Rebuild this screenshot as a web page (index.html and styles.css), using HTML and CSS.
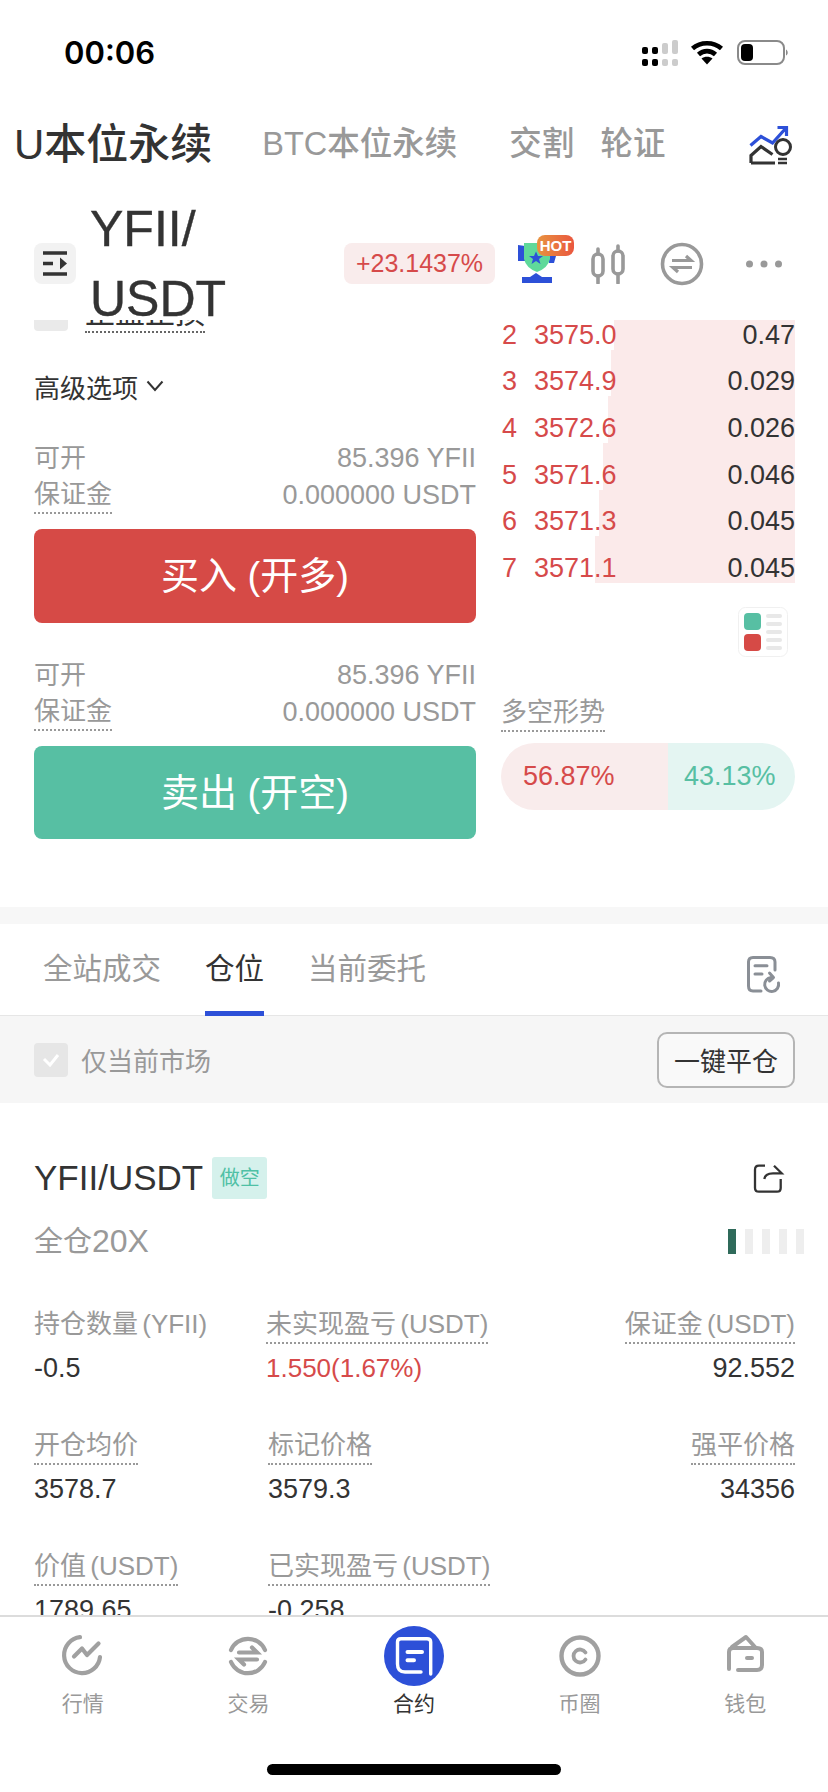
FILE: index.html
```html
<!DOCTYPE html>
<html lang="zh">
<head>
<meta charset="utf-8">
<title>合约</title>
<link rel="stylesheet" href="styles.css">
</head>
<body>
<div class="app">
  <header class="status">
    <span class="time">00:06</span>
    <div class="status-icons">
      <svg width="38" height="26" viewBox="0 0 38 26"><g fill="#000"><rect x="0" y="7" width="6" height="7" rx="2"/><rect x="10" y="7" width="6" height="7" rx="2"/><rect x="0" y="19" width="6" height="7" rx="2"/><rect x="10" y="19" width="6" height="7" rx="2"/></g><g fill="#ccc"><rect x="20" y="3" width="6" height="11" rx="2"/><rect x="30" y="0" width="6" height="14" rx="2"/><rect x="20" y="19" width="6" height="7" rx="2"/><rect x="30" y="19" width="6" height="7" rx="2"/></g></svg>
      <svg class="wifi" width="34" height="26" viewBox="0 0 34 26"><path d="M2.500 9.500C10.500 2.500 23.500 2.500 31.500 9.500M8.500 15.500C13.500 11 20.500 11 25.500 15.500" fill="none" stroke="#000" stroke-width="4.600"/><path d="M17 25.500L11.500 19.500C14.500 17 19.500 17 22.500 19.500Z" fill="#000"/></svg>
      <svg class="battery" width="52" height="26" viewBox="0 0 52 26"><rect x="1" y="1" width="46" height="23" rx="7" fill="none" stroke="#8a8a8a" stroke-width="2"/><rect x="4" y="4" width="12" height="17" rx="4" fill="#000"/><path d="M49 9.500C51 10.500 51.500 14.500 49 15.500Z" fill="#8a8a8a"/></svg>
    </div>
  </header>

  <nav class="top-tabs">
    <span class="top-tab active">U本位永续</span>
    <span class="top-tab">BTC本位永续</span>
    <span class="top-tab">交割</span>
    <span class="top-tab near">轮证</span>
    <svg class="idea" width="44" height="40" viewBox="0 0 44 40"><path d="M1.500 19.500L12 10.500L23.500 17L37 2M28.500 1.500H37.500V10" fill="none" stroke="#2d50d8" stroke-width="3.200"/><path d="M2 37V29.500L12 20.500L23.500 28.500M2 37H26" fill="none" stroke="#333" stroke-width="3.200"/><circle cx="34" cy="21" r="7.500" fill="none" stroke="#333" stroke-width="3"/><path d="M29 33H38M29 37H38" stroke="#333" stroke-width="2.600"/></svg>
  </nav>

  <section class="pair">
    <div class="pair-menu">
      <svg width="26" height="27" viewBox="0 0 26 27"><path d="M1 3H25M1 24H25M1 13.500H11" stroke="#333" stroke-width="3.600"/><path d="M18 7.500L25 13.500L18 19.500Z" fill="#333"/></svg>
    </div>
    <div class="pair-name">YFII/<br>USDT</div>
    <span class="pair-change">+23.1437%</span>
    <svg class="trophy" width="56" height="48" viewBox="0 0 56 48">
      <defs><linearGradient id="hot" x1="0" x2="1" y1="0" y2="0"><stop offset="0" stop-color="#e8933f"/><stop offset="1" stop-color="#ea573f"/></linearGradient></defs>
      <path d="M0 10L7 11V26H0ZM31 21H38L36 28H31Z" fill="#2d50d8"/>
      <path d="M6 8H32V24Q30 33 19 37Q8 33 6 24Z" fill="#5fd99a"/>
      <path d="M18 16.500L20 21H25L21 24L22.500 29L18 26L13.500 29L15 24L11 21H16Z" fill="#2d50d8"/>
      <path d="M4 42H12L18 38L24 42H34V48H4Z" fill="#2d50d8"/>
      <rect x="19" y="0" width="37" height="21" rx="8" fill="url(#hot)"/>
      <text x="37.500" y="16" text-anchor="middle" class="hot">HOT</text>
    </svg>
    <svg class="candle" width="36" height="40" viewBox="0 0 36 40"><g fill="none" stroke="#999" stroke-width="3.600" stroke-linecap="round"><rect x="3" y="10" width="10" height="22" rx="5"/><rect x="23" y="7" width="10" height="23" rx="5"/><path d="M8 5V10M8 32V39M28 2V7M28 30V39"/></g></svg>
    <svg class="swap" width="44" height="44" viewBox="0 0 44 44"><circle cx="22" cy="22" r="19.500" fill="none" stroke="#999" stroke-width="3.600"/><path d="M12 18.500H31L26 14M32 25.500H13L18 30" fill="none" stroke="#999" stroke-width="3.200"/></svg>
    <svg class="dots" width="36" height="8" viewBox="0 0 36 8"><g fill="#999"><circle cx="3.500" cy="4" r="3.500"/><circle cx="18" cy="4" r="3.500"/><circle cx="32.500" cy="4" r="3.500"/></g></svg>
  </section>

  <main class="content">
    <section class="trade">
      <div class="trade-form">
        <div class="stop-row"><span class="stop-check"></span><span class="stop-label">止盈止损</span></div>
        <div class="advanced">高级选项<svg width="18" height="12" viewBox="0 0 18 12"><path d="M1.500 1.500L9 10L16.500 1.500" fill="none" stroke="#333" stroke-width="2"/></svg></div>
        <div class="info first">
          <div class="info-row"><span>可开</span><span class="num">85.396 YFII</span></div>
          <div class="info-row"><span class="dotted">保证金</span><span class="num">0.000000 USDT</span></div>
        </div>
        <button class="action buy">买入 (开多)</button>
        <div class="info second">
          <div class="info-row"><span>可开</span><span class="num">85.396 YFII</span></div>
          <div class="info-row"><span class="dotted">保证金</span><span class="num">0.000000 USDT</span></div>
        </div>
        <button class="action sell">卖出 (开空)</button>
      </div>
      <div class="book">
        <div class="book-rows">
          <div class="book-row" style="background-size:181px 100%"><span class="idx">2</span><span class="price">3575.0</span><span class="amt">0.47</span></div>
          <div class="book-row" style="background-size:184px 100%"><span class="idx">3</span><span class="price">3574.9</span><span class="amt">0.029</span></div>
          <div class="book-row" style="background-size:187px 100%"><span class="idx">4</span><span class="price">3572.6</span><span class="amt">0.026</span></div>
          <div class="book-row" style="background-size:192px 100%"><span class="idx">5</span><span class="price">3571.6</span><span class="amt">0.046</span></div>
          <div class="book-row" style="background-size:196px 100%"><span class="idx">6</span><span class="price">3571.3</span><span class="amt">0.045</span></div>
          <div class="book-row" style="background-size:200px 100%"><span class="idx">7</span><span class="price">3571.1</span><span class="amt">0.045</span></div>
        </div>
        <div class="book-view">
          <svg width="50" height="50" viewBox="0 0 50 50"><rect x="0.500" y="0.500" width="49" height="49" rx="7" fill="#fff" stroke="#f0f0f0"/><rect x="6" y="6" width="17" height="17" rx="4" fill="#57bfa3"/><rect x="6" y="27" width="17" height="17" rx="4" fill="#d64a46"/><g fill="#e8e8e8"><rect x="28" y="7" width="16" height="4" rx="2"/><rect x="28" y="15" width="16" height="4" rx="2"/><rect x="28" y="23" width="16" height="4" rx="2"/><rect x="28" y="31" width="16" height="4" rx="2"/><rect x="28" y="39" width="16" height="4" rx="2"/></g></svg>
        </div>
        <div class="trend-label"><span class="dotted">多空形势</span></div>
        <div class="trend">
          <span class="long">56.87%</span>
          <span class="short">43.13%</span>
        </div>
      </div>
    </section>

    <div class="sep"></div>

    <nav class="sub-tabs">
      <span class="sub-tab">全站成交</span>
      <span class="sub-tab active">仓位</span>
      <span class="sub-tab">当前委托</span>
      <svg class="record" width="50" height="50" viewBox="0 0 50 50"><g fill="none" stroke="#8a8f96" stroke-width="3" stroke-linecap="round" stroke-linejoin="round"><path d="M35 20V12Q35 7.500 30 7.500H13Q8.500 7.500 8.500 12V36Q8.500 41 13 41H21"/><path d="M15 15.700H27M15 24H22"/><path d="M38.500 33A7 7 0 1 1 31 27.500"/><path d="M29.500 23L33.500 27.500L29.500 31"/></g></svg>
    </nav>

    <div class="toolbar">
      <span class="check"><svg width="18" height="14" viewBox="0 0 18 14"><path d="M2 6L8 12L16 2" fill="none" stroke="#fff" stroke-width="3"/></svg></span>
      <span class="check-label">仅当前市场</span>
      <button class="close-all">一键平仓</button>
    </div>

    <article class="position">
      <div class="pos-head">
        <span class="pos-name">YFII/USDT</span>
        <span class="pos-tag">做空</span>
        <svg class="share" width="50" height="50" viewBox="0 0 50 50"><path d="M20 10.700H14Q10 10.700 10 14.700V33Q10 36.700 14 36.700H32Q35.700 36.700 35.700 33V24M19.300 24Q20 18.300 28 18.300H36.700L29 10.700" fill="none" stroke="#333" stroke-width="2.300"/></svg>
      </div>
      <div class="pos-sub">
        <span class="pos-lev">全仓<span class="lev-num">20X</span></span>
        <div class="risk"><i class="on"></i><i></i><i></i><i></i><i></i></div>
      </div>
      <div class="pos-grid">
        <div class="cell"><span class="label">持仓数量 (YFII)</span><span class="value">-0.5</span></div>
        <div class="cell shift"><span class="label dotted">未实现盈亏 (USDT)</span><span class="value red">1.550(1.67%)</span></div>
        <div class="cell end"><span class="label dotted">保证金 (USDT)</span><span class="value">92.552</span></div>
        <div class="cell"><span class="label dotted">开仓均价</span><span class="value">3578.7</span></div>
        <div class="cell"><span class="label dotted">标记价格</span><span class="value">3579.3</span></div>
        <div class="cell end"><span class="label dotted">强平价格</span><span class="value">34356</span></div>
        <div class="cell"><span class="label dotted">价值 (USDT)</span><span class="value">1789.65</span></div>
        <div class="cell"><span class="label dotted">已实现盈亏 (USDT)</span><span class="value">-0.258</span></div>
      </div>
    </article>
  </main>

  <footer class="tabbar">
    <div class="tabs">
      <div class="tab">
        <svg width="48" height="48" viewBox="0 0 48 48"><g fill="none" stroke="#a0a0a0" stroke-width="4.200" stroke-linecap="round" stroke-linejoin="round"><path d="M21 5.200A18 18 0 1 0 41 25"/><path d="M15 24.500L23 16.500L28 23L39.500 11.500"/></g></svg>
        <span>行情</span>
      </div>
      <div class="tab">
        <svg width="48" height="48" viewBox="0 0 48 48"><g fill="none" stroke="#a0a0a0" stroke-width="4.200" stroke-linecap="round"><path d="M7 18A18.500 18.500 0 0 1 41 18M7 30A18.500 18.500 0 0 0 41 30"/><path d="M15 20.500H33L28 15.500M33 27.500H15L20 32.500"/></g></svg>
        <span>交易</span>
      </div>
      <div class="tab active">
        <svg width="60" height="60" viewBox="0 0 60 60"><circle cx="30" cy="30" r="30" fill="#2d50d8"/><g fill="none" stroke="#fff" stroke-linecap="round"><path d="M13.500 38V16Q13.500 12.700 17 12.700H43Q46.700 12.700 46.700 16V48M13.500 38Q13.500 46 21 46H37" stroke-width="3.400"/><path d="M23.500 26H38M23.500 34.300H30" stroke-width="4"/></g></svg>
        <span>合约</span>
      </div>
      <div class="tab">
        <svg width="48" height="48" viewBox="0 0 48 48"><g fill="none" stroke="#a0a0a0" stroke-linecap="round"><circle cx="24" cy="24" r="18.500" stroke-width="4.400"/><path d="M29.500 20.500A6.500 6.500 0 1 0 29.500 27.500" stroke-width="3.800"/></g></svg>
        <span>币圈</span>
      </div>
      <div class="tab">
        <svg width="48" height="48" viewBox="0 0 48 48"><g fill="none" stroke="#a0a0a0" stroke-width="4" stroke-linecap="round" stroke-linejoin="round"><path d="M8 37V20Q8 16 12 16H36Q41 16 41 20V33Q41 38 36 38H17"/><path d="M11 15L25 5L34 15"/><path d="M26 26H31"/></g></svg>
        <span>钱包</span>
      </div>
    </div>
    <div class="home"></div>
  </footer>
</div>
</body>
</html>
```
FILE: styles.css
```css
* { box-sizing: border-box; }
html, body { margin: 0; padding: 0; background: #fff; }
body { font-family: "Liberation Sans", "Noto Sans CJK SC", sans-serif; color: #333; }
svg { display: block; flex: none; }
button { font: inherit; border: 0; padding: 0; }

.app { width: 828px; height: 1792px; display: flex; flex-direction: column; overflow: hidden; }

/* status bar */
.status { height: 100px; flex: none; display: flex; justify-content: space-between; padding: 35px 39px 0 64px; }
.time { font: 600 31px/36px Inter, sans-serif; color: #000; }
.status-icons { display: flex; align-items: flex-start; padding-top: 5px; }
.wifi { margin: -1px 0 0 10px; }
.battery { margin-left: 13px; }

/* top tabs */
.top-tabs { height: 107px; flex: none; padding: 0 35px 26px 14px; display: flex; align-items: center; gap: 52px; }
.top-tab { font-size: 32.500px; font-weight: 500; color: #999; white-space: nowrap; }
.top-tab.active { font-size: 42px; color: #333; margin-right: -2px; }
.top-tab.near { margin-left: -26px; }
.idea { margin: 11px 0 0 auto; }

/* pair header */
.pair { height: 113px; flex: none; display: flex; align-items: center; padding: 0 46px 0 34px; position: relative; z-index: 2; }
.pair-menu { width: 42px; height: 41px; background: #f2f2f2; border-radius: 8px; display: flex; align-items: center; justify-content: center; }
.pair-name { flex: 1; margin-left: 14px; font-size: 50px; line-height: 70px; color: #333; white-space: nowrap; -webkit-text-stroke: 0.4px #333; }
.pair-change { width: 151px; height: 41px; background: #f9ecec; border-radius: 8px; font-size: 25px; line-height: 41px; text-align: center; color: #d64a4a; }
.trophy { margin: -10px 0 0 23px; }
.candle { margin-left: 16px; }
.swap { margin-left: 34px; }
.dots { margin-left: 42px; }
.hot { font: 700 15px "Liberation Sans", sans-serif; fill: #fff; }

/* scroll area */
.content { flex: 1; min-height: 0; overflow: hidden; }

.trade { height: 587px; display: flex; padding: 0 33px 0 34px; }
.trade-form { width: 442px; flex: none; margin-top: -30px; }
.book { margin-left: 25px; flex: 1; }

.dotted { border-bottom: 2px dotted #999; }

.stop-row { height: 43px; display: flex; align-items: flex-end; }
.stop-check { width: 34px; height: 34px; margin-bottom: 2px; background: #eaeaea; border-radius: 4px; }
.stop-label { margin-left: 17px; font-size: 30px; line-height: 36px; color: #333; border-bottom: 2px dotted #666; }

.advanced { margin-top: 33px; height: 40px; display: flex; align-items: center; gap: 8px; font-size: 26px; color: #333; }

.info { font-size: 26px; color: #999; }
.info.first { margin-top: 34px; }
.info.second { margin-top: 34px; }
.info-row { height: 37px; display: flex; justify-content: space-between; align-items: flex-start; line-height: 36px; }
.info-row .dotted { line-height: 35px; }
.num { font-size: 27px; }

.action { display: block; width: 100%; margin-top: 15px; padding-bottom: 7px; border-radius: 8px; color: #fff; font-size: 38px; }
.buy { height: 94px; background: #d64a46; }
.sell { height: 93px; background: #57bfa3; }

/* order book */
.book-rows { margin-top: -17px; }
.book-row { height: 46.670px; display: flex; align-items: flex-end; font-size: 27px; line-height: 30px; background-image: linear-gradient(#fbeaea, #fbeaea); background-repeat: no-repeat; background-position: right top; }
.idx { width: 33px; padding-left: 1px; color: #d64a4a; }
.price { color: #d64a4a; }
.amt { margin-left: auto; color: #333; }

.book-view { margin-top: 24px; display: flex; justify-content: flex-end; padding-right: 7px; }
.trend-label { margin-top: 38px; font-size: 26px; line-height: 35px; color: #999; }
.trend-label .dotted { display: inline-block; }
.trend { margin-top: 11px; height: 67px; border-radius: 34px; overflow: hidden; display: flex; font-size: 27px; line-height: 67px; }
.long { width: 167px; padding-left: 22px; background: #f9ecec; color: #d64a4a; }
.short { flex: 1; padding-left: 16px; background: #e4f5f2; color: #57bfa3; }

.sep { height: 17px; background: #f7f7f7; }

/* sub tabs */
.sub-tabs { height: 92px; display: flex; align-items: stretch; padding: 0 38px 0 43px; gap: 44px; border-bottom: 1px solid #e6e6e6; }
.sub-tab { font-size: 29.500px; color: #999; line-height: 90px; height: 92px; border-bottom: 5px solid transparent; }
.sub-tab.active { color: #333; border-bottom-color: #2d50d8; }
.record { margin: 26px 0 0 auto; }

/* toolbar */
.toolbar { height: 87px; background: #f6f6f6; display: flex; align-items: center; padding: 0 33px 0 34px; }
.check { width: 34px; height: 34px; background: #e6e6e6; border-radius: 4px; display: flex; align-items: center; justify-content: center; }
.check-label { margin-left: 13px; font-size: 26px; color: #999; }
.close-all { margin-left: auto; width: 138px; height: 56px; border: 2px solid #b5b5b5; border-radius: 10px; background: #f9f9f9; color: #333; font-size: 26px; }

/* position */
.position { padding: 54px 33px 0 34px; }
.pos-head { height: 42px; display: flex; align-items: center; }
.pos-name { font-size: 35px; color: #333; }
.pos-tag { margin-left: 9px; width: 55px; height: 42px; background: #d5f1ec; border-radius: 3px; font-size: 20px; line-height: 42px; text-align: center; color: #4fc0a5; }
.share { margin: 4px 0 0 auto; }
.pos-sub { margin-top: 26px; height: 32px; display: flex; align-items: center; justify-content: space-between; color: #999; }
.pos-lev { font-size: 29px; line-height: 28px; }
.lev-num { font-size: 32px; }
.risk { display: flex; gap: 9px; margin-right: -9px; }
.risk i { width: 8px; height: 25px; background: #eee; }
.risk i.on { background: #2f6a5a; }

.pos-grid { margin-top: 49px; display: grid; grid-template-columns: 234px 1fr auto; row-gap: 41px; }
.cell { display: flex; flex-direction: column; align-items: flex-start; }
.cell.end { align-items: flex-end; }
.cell.shift { margin-left: -2px; }
.label { font-size: 26px; word-spacing: -3px; color: #999; line-height: 36px; min-height: 38px; }
.value { margin-top: 6px; font-size: 27px; line-height: 36px; color: #333; }
.value.red { font-size: 26px; color: #d64a4a; }

/* tab bar */
.tabbar { height: 177px; flex: none; background: #fff; border-top: 2px solid #dcdcdc; position: relative; z-index: 2; }
.tabs { display: grid; grid-template-columns: repeat(5, 1fr); padding-top: 9px; }
.tab { display: flex; flex-direction: column; align-items: center; font-size: 21px; color: #999; }
.tab svg { margin: 6px 0; }
.tab.active { color: #333; }
.tab.active svg { margin: 0; }
.tab span { line-height: 28px; margin-top: 4px; }
.home { width: 294px; height: 11px; margin: 46px auto 0; background: #000; border-radius: 6px; }
```
